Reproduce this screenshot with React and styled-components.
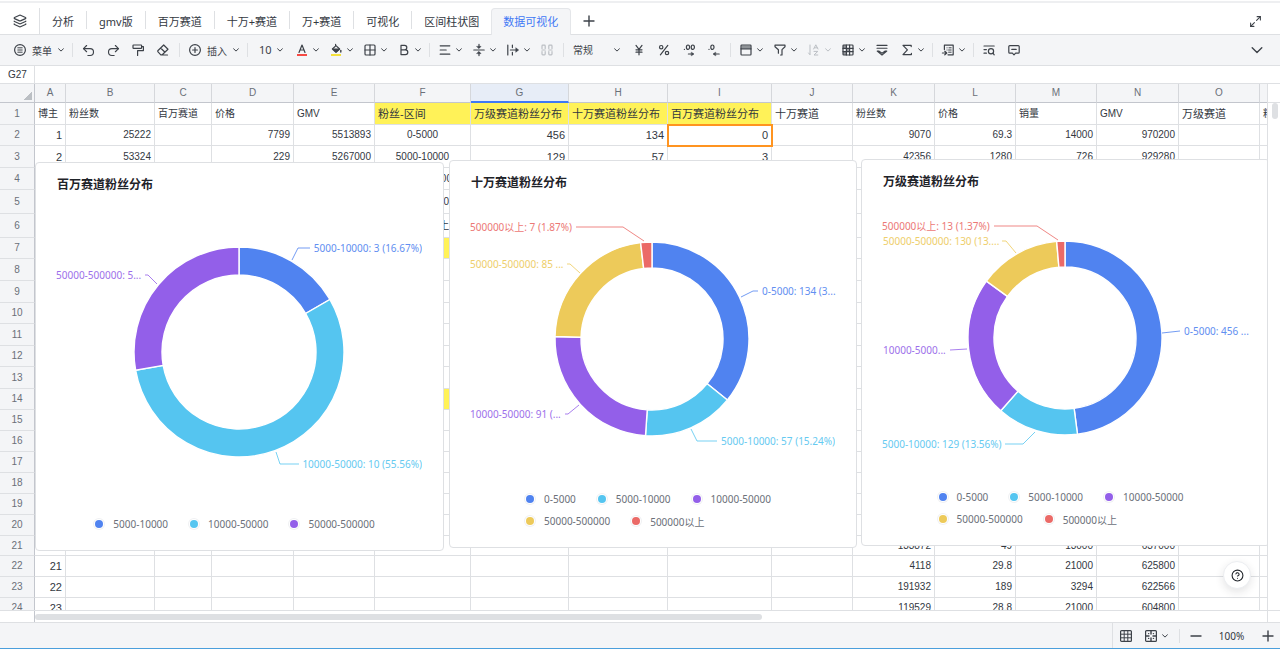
import React from "react";
import styled, { createGlobalStyle } from "styled-components";
import { Layers, Undo2, Redo2, Maximize2, CircleHelp } from "lucide-react";

const ui = `"Noto Sans", "Noto Sans CJK SC", sans-serif`;
const cellFont = `"Liberation Sans", "Noto Sans CJK SC", sans-serif`;

const palette = {
  ink: "#1f2329",
  cell: "#33383f",
  icon: "#3d4249",
  muted: "#6b7079",
  disabled: "#bbbfc4",
  bar: "#f4f5f7",
  line: "#dee0e3",
  blue: "#5083f0",
  cyan: "#55c5f0",
  purple: "#935fe9",
  yellow: "#edca5a",
  red: "#eb6a67",
  brand: "#3f78f5",
  mark: "#fff258",
};

const GlobalStyle = createGlobalStyle`
  * { box-sizing: border-box; }
  html, body { margin: 0; height: 100%; overflow: hidden; }
  body { font-family: ${ui}; color: ${palette.ink}; background: #fff; }
  button, input, select { font: inherit; color: inherit; }
  ul, h2 { margin: 0; padding: 0; }
`;

const Page = styled.div`
  display: flex;
  flex-direction: column;
  height: 100vh;
  border-bottom: 1px solid #4a9fdc;
`;

const TopStrip = styled.div`
  flex: none;
  height: 3px;
  border-bottom: 2px solid #eeeff1;
`;

/* ---------- sheet tabs ---------- */

const TabBar = styled.nav`
  flex: none;
  display: flex;
  align-items: flex-end;
  height: 32px;
  border-bottom: 1px solid ${palette.line};
`;

const TabSep = styled.span`
  flex: none;
  width: 1px;
  height: ${(p) => (p.$tall ? 26 : 18)}px;
  margin-bottom: ${(p) => (p.$tall ? 0 : 5)}px;
  background: ${palette.line};
`;

const Tab = styled.button`
  flex: none;
  height: 27px;
  margin: 0 0 -1px;
  padding: 0 12px 0 ${(p) => (p.$active ? 11 : 12)}px;
  border: 1px solid ${(p) => (p.$active ? "#e4e6e9" : "transparent")};
  border-width: 1px ${(p) => (p.$active ? 1 : 0)}px 0;
  border-radius: 4px 4px 0 0;
  background: ${(p) => (p.$active ? palette.bar : "transparent")};
  color: ${(p) => (p.$active ? palette.brand : palette.cell)};
  font-size: 11px;
  line-height: 16px;
  white-space: nowrap;
`;

const TabIconButton = styled.button`
  flex: none;
  display: flex;
  align-items: center;
  justify-content: center;
  width: ${(p) => p.$w || 40}px;
  height: 26px;
  padding: 0;
  border: 0;
  background: none;
  color: ${palette.icon};
`;

const Spacer = styled.div`
  flex: 1;
`;

/* ---------- toolbar ---------- */

const Toolbar = styled.div`
  flex: none;
  display: flex;
  align-items: center;
  height: 31px;
  padding: 0 10px 0 8px;
  background: ${palette.bar};
  border-bottom: 1px solid ${palette.line};
  overflow: hidden;
`;

const ToolButton = styled.button`
  flex: none;
  display: flex;
  align-items: center;
  gap: 2px;
  width: ${(p) => p.$w || 25}px;
  height: 24px;
  padding: 0 4px;
  border: 0;
  background: none;
  color: ${(p) => (p.disabled ? palette.disabled : palette.icon)};
  font-size: 10px;
`;

const CenteredButton = styled(ToolButton)`
  justify-content: center;
`;

const ToolLabel = styled.span`
  flex: 1;
  padding-left: 2px;
  text-align: left;
  white-space: nowrap;
`;

const ToolSep = styled.span`
  flex: none;
  width: 1px;
  height: 14px;
  margin: 0 3px;
  background: ${palette.line};
`;

const SelectBox = styled.label`
  flex: none;
  display: flex;
  align-items: center;
  width: ${(p) => p.$w}px;
  padding: 0 6px 0 ${(p) => p.$pad}px;
  color: ${palette.icon};
`;

const Select = styled.select`
  flex: 1;
  min-width: 0;
  padding: 0;
  border: 0;
  appearance: none;
  background: none;
  font-size: ${(p) => p.$size || 10}px;
  line-height: 16px;
`;

const Svg = styled.svg`
  flex: none;
  display: block;
  fill: none;
  stroke: currentColor;
  stroke-width: 1.2;
  stroke-linecap: round;
  stroke-linejoin: round;
`;

const Icon = ({ children, ...rest }) => (
  <Svg width="16" height="16" viewBox="0 0 16 16" aria-hidden="true" {...rest}>
    {children}
  </Svg>
);

const Chevron = () => (
  <Svg width="8" height="8" viewBox="0 0 8 8" aria-hidden="true">
    <path d="M1.6 2.8 4 5.1l2.4-2.3" strokeWidth="1" />
  </Svg>
);

const icons = {
  menu: (
    <Icon>
      <circle cx="8" cy="8" r="5.4" />
      <path d="M5.8 5.8h4.4M5.8 8h4.4M5.8 10.2h4.4" strokeWidth="1" />
    </Icon>
  ),
  paint: (
    <Icon>
      <rect x="3" y="3" width="8.6" height="3.4" rx=".6" />
      <path d="M11.8 4.6h1.6v4H7.6v1.6M7.6 10.4v3" />
    </Icon>
  ),
  eraser: (
    <Icon>
      <path d="M8.7 3 13 7.2l-5.8 5.6H5.8L2.8 9.6v-.9zM5.6 6l4.4 4.2M7 13h5.5" />
    </Icon>
  ),
  plus: (
    <Icon>
      <circle cx="8" cy="8" r="5.4" />
      <path d="M8 5.6v4.8M5.6 8h4.8" />
    </Icon>
  ),
  color: (
    <Icon>
      <path d="M5 10.4 8 3l3 7.4M6 8h4" />
      <path d="M3 13h10" stroke="#f54a45" strokeWidth="2" strokeLinecap="butt" />
    </Icon>
  ),
  fill: (
    <Icon>
      <path d="m8 3.6 3.6 3.4L8 10.2 4.4 7zM7.6 4V2.4" />
      <path d="M5 7h6.4L8 10z" fill="currentColor" />
      <path d="M12.8 8.4v1.6" strokeWidth="1.4" />
      <path d="M3 13h10" stroke="#f5e13c" strokeWidth="2" strokeLinecap="butt" />
    </Icon>
  ),
  border: (
    <Icon>
      <rect x="3" y="3" width="10" height="10" rx="1" />
      <path d="M8 3v10M3 8h10" />
    </Icon>
  ),
  bold: (
    <Icon>
      <path d="M5 3.4h3.6a2.2 2.2 0 0 1 0 4.4H5zM5 7.8h4.4a2.4 2.4 0 0 1 0 4.8H5z" />
    </Icon>
  ),
  align: (
    <Icon>
      <path d="M3.2 3.8h9.6M3.2 8h6M3.2 12.2h9.6" />
    </Icon>
  ),
  valign: (
    <Icon>
      <path d="M2.8 8h10.4M8 2.4v3M8 13.6v-3" />
      <path d="M6 4.4h4L8 6.4zM6 11.6h4L8 9.6z" fill="currentColor" strokeWidth=".6" />
    </Icon>
  ),
  wrap: (
    <Icon>
      <path d="M2.8 3v10M7.4 3v2.6M7.4 10.4V13M5.4 8h6.4" />
      <path d="m11 6 2.6 2L11 10z" fill="currentColor" strokeWidth=".6" />
    </Icon>
  ),
  merge: (
    <Icon>
      <path d="M3 6.4V4q0-.8.8-.8h1.6q.8 0 .8.8v2.4M9.8 6.4V4q0-.8.8-.8h1.6q.8 0 .8.8v2.4M3 9.6V12q0 .8.8.8h1.6q.8 0 .8-.8V9.6M9.8 9.6V12q0 .8.8.8h1.6q.8 0 .8-.8V9.6M3 8h3.2M9.8 8H13" />
    </Icon>
  ),
  yen: (
    <Icon>
      <path d="m5 3.4 3 4 3-4M8 7.4v5.4M5 7.8h6M5 10.2h6" />
    </Icon>
  ),
  percent: (
    <Icon>
      <circle cx="5.2" cy="5.2" r="1.7" />
      <circle cx="11" cy="11" r="1.7" />
      <path d="m11.8 3.4-7.4 9.4" />
    </Icon>
  ),
  moreDecimals: (
    <Icon>
      <ellipse cx="7" cy="5.2" rx="1.6" ry="2.2" />
      <ellipse cx="11.8" cy="5.2" rx="1.6" ry="2.2" />
      <path d="M3.4 7.3v.1M7.4 12h4" />
      <path d="m10.6 10.4 2.4 1.6-2.4 1.6z" fill="currentColor" strokeWidth=".6" />
    </Icon>
  ),
  lessDecimals: (
    <Icon>
      <ellipse cx="6.4" cy="5.2" rx="1.6" ry="2.2" />
      <path d="M3 7.3v.1M9 12h4.2" />
      <path d="M9.4 10.4 7 12l2.4 1.6z" fill="currentColor" strokeWidth=".6" />
    </Icon>
  ),
  table: (
    <Icon>
      <rect x="3" y="3" width="10" height="10" rx=".8" />
      <path d="M3.4 3.4h9.2v3H3.4z" fill="currentColor" fillOpacity=".55" stroke="none" />
      <path d="M3 6.8h10" />
    </Icon>
  ),
  filter: (
    <Icon>
      <path d="M3 3.2h10v1.6L10 7.6V13H8.6M3 3.2v1.6l3.4 3v3.4" />
    </Icon>
  ),
  sort: (
    <Icon>
      <path d="M4 3v9.8L2.6 11M7.6 7 9.8 2.8 12 7M8.4 5.8h2.8M8 9.4h3.8L8 13h3.8" strokeWidth="1" />
    </Icon>
  ),
  freeze: (
    <Icon>
      <rect x="3" y="3" width="10" height="10" rx=".8" />
      <path d="M3 6.4h10M3 9.6h10M6.4 3v10M9.6 3v10" />
      <path d="M6.4 6.4h3.2v3.2H6.4zM3 3h3.4v3.4H3zM3 9.6h3.4V13H3z" fill="currentColor" fillOpacity=".5" stroke="none" />
    </Icon>
  ),
  collapseRows: (
    <Icon>
      <path d="M3 3.4h10M3 6.2h10M3.2 9h1.6L8 11.2 11.2 9h1.6L8 13.2z" strokeWidth="1.1" />
    </Icon>
  ),
  sum: (
    <Icon strokeWidth="1.4">
      <path d="M12.2 4.6V3.4H4l4.4 4.5L4 12.6h8.4v-1.2" />
    </Icon>
  ),
  pivot: (
    <Icon>
      <path d="M4.4 7.4V3.2h8.8v9.6H8" />
      <path d="M7 5.8h.1M9 5.8h2.2M8.6 8h2.6M8.6 10.2h2.6M7 8h.1" strokeWidth="1" />
      <path d="M2.4 11h4M4.8 9.2 6.8 11l-2 1.8" />
    </Icon>
  ),
  find: (
    <Icon>
      <path d="M3 4h10.2M3 7.6h2.4M3 11.2h2.4" />
      <circle cx="10" cy="9.2" r="2.6" />
      <path d="M12 11.2l1.2 1.6" />
    </Icon>
  ),
  comment: (
    <Icon>
      <path d="M3.8 3.6h8.4q1 0 1 1v5.6q0 1-1 1H9.6L8 12.8l-1.6-1.6H3.8q-1 0-1-1V4.6q0-1 1-1zM5.8 7.4h4.4" />
    </Icon>
  ),
  grid: (
    <Icon>
      <rect x="2.6" y="2.6" width="10.8" height="10.8" rx="1" />
      <path d="M3 6.2h10M3 9.8h10M6.2 3v10M9.8 3v10" strokeWidth="1" />
    </Icon>
  ),
  fit: (
    <Icon>
      <rect x="2.6" y="2.6" width="10.8" height="10.8" rx="1" />
      <path d="M8 3v3M8 10v3M3 8h3M10 8h3" strokeWidth="1.4" />
      <path d="M5.6 5.6h.1M10.4 5.6h.1M5.6 10.4h.1M10.4 10.4h.1" strokeWidth="1.4" />
    </Icon>
  ),
};

const Tool = ({ name, label, menu, text, width, disabled }) => (
  <ToolButton type="button" aria-label={label} disabled={disabled} $w={width || (menu ? 34 : 25)}>
    {icons[name]}
    {text && <ToolLabel>{text}</ToolLabel>}
    {menu && <Chevron />}
  </ToolButton>
);

/* ---------- formula bar ---------- */

const FormulaBar = styled.div`
  flex: none;
  display: flex;
  height: 18px;
  border-bottom: 1px solid ${palette.line};
`;

const NameBox = styled.input`
  flex: none;
  width: 35px;
  padding: 0 0 0 8px;
  border: 0;
  border-right: 1px solid ${palette.line};
  color: ${palette.cell};
  font-family: ${cellFont};
  font-size: 10px;
`;

const FormulaInput = styled.input`
  flex: 1;
  min-width: 0;
  padding: 0 8px;
  border: 0;
  font-size: 10px;
`;

/* ---------- sheet ---------- */

const Sheet = styled.main`
  position: relative;
  flex: 1;
  min-height: 0;
  display: grid;
  grid-template-columns: minmax(0, 1fr) 13px;
  grid-template-rows: minmax(0, 1fr) 12px;
`;

const Canvas = styled.div`
  position: relative;
  overflow: hidden;
`;

const Grid = styled.table`
  table-layout: fixed;
  width: 1342px;
  border-collapse: separate;
  border-spacing: 0;
  color: ${palette.cell};
  font-family: ${cellFont};
  font-size: 10px;
  line-height: 14px;
`;

const Row = styled.tr`
  height: ${(p) => p.$h}px;
`;

const ColHead = styled.th`
  padding: 0;
  border-right: 1px solid #d5d7db;
  border-bottom: ${(p) => (p.$active ? `2px solid ${palette.brand}` : "1px solid #c3c6cd")};
  background: ${(p) => (p.$active ? "#e7edf7" : palette.bar)};
  color: ${palette.muted};
  font-weight: 400;
`;

const Corner = styled.td`
  padding: 0;
  border-right: 1px solid #c3c6cd;
  border-bottom: 1px solid #c3c6cd;
  background: linear-gradient(135deg, transparent 50%, #bbbfc4 50%) right 2px bottom 2px / 9px 9px no-repeat,
    ${palette.bar};
`;

const RowHead = styled.th`
  padding: 0;
  border-right: 1px solid #c3c6cd;
  border-bottom: 1px solid ${palette.line};
  background: ${palette.bar};
  color: ${palette.muted};
  font-weight: 400;
`;

const Cell = styled.td`
  padding: 0 3px;
  border-right: 1px solid ${palette.line};
  border-bottom: 1px solid ${palette.line};
  background: ${(p) => (p.$mark ? palette.mark : "#fff")};
  font-size: ${(p) => (p.$large ? 11 : 10)}px;
  text-align: ${(p) => p.$align};
  white-space: nowrap;
  overflow: hidden;
  ${(p) => p.$outlined && "outline: 2px solid #ff9420; outline-offset: -1px;"}
`;

const VerticalGutter = styled.div`
  border-left: 1px solid ${palette.line};
`;

const GutterHead = styled.div`
  height: 19px;
  border-bottom: 1px solid ${palette.line};
`;

const VerticalThumb = styled.div`
  width: 6px;
  height: 16px;
  margin-left: 4px;
  border-radius: 3px;
  background: ${palette.line};
`;

const HorizontalGutter = styled.div`
  display: flex;
  align-items: center;
  border-top: 1px solid ${palette.line};
`;

const GutterCorner = styled.div`
  flex: none;
  width: 35px;
  height: 100%;
  border-right: 1px solid #c3c6cd;
`;

const HorizontalTrack = styled.div`
  flex: 1;
  padding-top: 1px;
`;

const HorizontalThumb = styled.div`
  width: 59%;
  height: 6px;
  border-radius: 3px;
  background: ${palette.line};
`;

const GutterEnd = styled.div`
  border-left: 1px solid ${palette.line};
  border-top: 1px solid ${palette.line};
`;

const columns = [
  ["A", 31], ["B", 89], ["C", 57], ["D", 82], ["E", 81], ["F", 96], ["G", 98], ["H", 99],
  ["I", 104], ["J", 81], ["K", 82], ["L", 81], ["M", 81], ["N", 82], ["O", 81], ["P", 82],
];

const rowHeights = [
  22, 21, 22, 22, 24, 24, 21, 22, 22, 21, 22, 21, 22, 21, 21, 21, 21, 21, 21, 21, 20, 21, 21, 21,
];

const data = {
  1: {
    A: "博主", B: "粉丝数", C: "百万赛道", D: "价格", E: "GMV", F: "粉丝-区间", G: "万级赛道粉丝分布",
    H: "十万赛道粉丝分布", I: "百万赛道粉丝分布", J: "十万赛道", K: "粉丝数", L: "价格", M: "销量",
    N: "GMV", O: "万级赛道", P: "粉丝数",
  },
  2: { A: 1, B: 25222, D: 7799, E: 5513893, F: "0-5000", G: 456, H: 134, I: 0, K: 9070, L: 69.3, M: 14000, N: 970200 },
  3: { A: 2, B: 53324, D: 229, E: 5267000, F: "5000-10000", G: 129, H: 57, I: 3, K: 42356, L: 1280, M: 726, N: 929280 },
  4: { F: "10000-50000" },
  5: { F: "50000-500000" },
  6: { F: "500000以上" },
  21: { K: 133872, L: 49, M: 13000, N: 637000 },
  22: { A: 21, K: 4118, L: 29.8, M: 21000, N: 625800 },
  23: { A: 22, K: 191932, L: 189, M: 3294, N: 622566 },
  24: { A: 23, K: 119529, L: 28.8, M: 21000, N: 604800 },
};

const isMarked = (row, col) =>
  (row === 1 && "FGHI".includes(col)) || (col === "F" && (row === 7 || row === 14));

const isLarge = (row, col) => (row === 1 ? "FGHIJO".includes(col) : "AGHI".includes(col));

const alignOf = (row, col) => (row === 1 ? "left" : col === "F" ? "center" : "right");

/* ---------- charts ---------- */

const Card = styled.section`
  position: absolute;
  display: flex;
  flex-direction: column;
  left: ${(p) => p.$x}px;
  top: ${(p) => p.$y}px;
  width: ${(p) => p.$w}px;
  height: ${(p) => p.$h}px;
  padding-bottom: 15px;
  border: 1px solid ${palette.line};
  border-radius: 4px;
  background: #fff;
`;

const CardTitle = styled.h2`
  flex: none;
  padding: 0 21px;
  font-size: 12px;
  font-weight: 600;
  line-height: 43px;
  height: 40px;
`;

const Donut = styled.svg`
  flex: 1;
  min-height: 0;
  width: 100%;
  display: block;
`;

const Label = styled.text`
  font-size: 10px;
  dominant-baseline: central;
  opacity: 0.9;
`;

const Legend = styled.div`
  flex: none;
  align-self: center;
`;

const LegendRow = styled.ul`
  display: flex;
  gap: 21px;
  padding-right: 10px;
  list-style: none;
`;

const LegendItem = styled.li`
  display: flex;
  align-items: center;
  gap: 9px;
  height: 22px;
  color: ${palette.muted};
  font-size: 10px;
`;

const Dot = styled.span`
  width: 10px;
  height: 10px;
  padding: 1px;
  border-radius: 50%;
  box-shadow: 0 0 0 1px #f0f1f3;

  &::before {
    content: "";
    display: block;
    height: 8px;
    border-radius: 50%;
    background: ${(p) => p.$color};
  }
`;

const { blue, cyan, purple, yellow, red } = palette;

/* Label and leader points are measured from the centre of the ring. */
const charts = [
  {
    title: "百万赛道粉丝分布",
    x: 35, y: 78, w: 409, h: 389,
    view: "-203 -149 407 310",
    outer: 105, inner: 77,
    slices: [[3, blue], [10, cyan], [5, purple]],
    labels: [
      { text: "5000-10000: 3 (16.67%)", color: blue, x: 183, y: -104, anchor: "end", line: "53,-92 59,-104 71,-104" },
      { text: "50000-500000: 5...", color: purple, x: -183, y: -77, anchor: "start", line: "-82,-68 -91,-77 -94,-77" },
      { text: "10000-50000: 10 (55.56%)", color: cyan, x: 183, y: 112, anchor: "end", line: "37,100 41,112 60,112" },
    ],
    legend: [[["5000-10000", blue], ["10000-50000", cyan], ["50000-500000", purple]]],
  },
  {
    title: "十万赛道粉丝分布",
    x: 449, y: 76, w: 408, h: 388,
    view: "-202 -138 406 287",
    outer: 97, inner: 71,
    slices: [[134, blue], [57, cyan], [91, purple], [85, yellow], [7, red]],
    labels: [
      { text: "500000以上: 7 (1.87%)", color: red, x: -182, y: -112, anchor: "start", line: "-76,-112 -29,-112 -8,-98" },
      { text: "50000-500000: 85 ...", color: yellow, x: -182, y: -75, anchor: "start", line: "-85,-75 -82,-75 -72,-66" },
      { text: "0-5000: 134 (3...", color: blue, x: 110, y: -48, anchor: "start", line: "89,-42 101,-48 106,-48" },
      { text: "10000-50000: 91 (...", color: purple, x: -182, y: 75, anchor: "start", line: "-87,75 -84,75 -73,66" },
      { text: "5000-10000: 57 (15.24%)", color: cyan, x: 183, y: 102, anchor: "end", line: "39,90 45,102 65,102" },
    ],
    legend: [
      [["0-5000", blue], ["5000-10000", cyan], ["10000-50000", purple]],
      [["50000-500000", yellow], ["500000以上", red]],
    ],
  },
  {
    title: "万级赛道粉丝分布",
    x: 861, y: 75, w: 409, h: 387,
    view: "-203 -138 407 286",
    outer: 97, inner: 71,
    slices: [[456, blue], [129, cyan], [223, purple], [130, yellow], [13, red]],
    labels: [
      { text: "500000以上: 13 (1.37%)", color: red, x: -183, y: -112, anchor: "start", line: "-71,-112 -28,-112 -7,-98" },
      { text: "50000-500000: 130 (13....", color: yellow, x: -182, y: -97, anchor: "start", line: "-63,-97 -59,-97 -49,-85" },
      { text: "0-5000: 456 ...", color: blue, x: 119, y: -7, anchor: "start", line: "97,-5 115,-7" },
      { text: "10000-5000...", color: purple, x: -182, y: 12, anchor: "start", line: "-115,12 -98,11" },
      { text: "5000-10000: 129 (13.56%)", color: cyan, x: -183, y: 106, anchor: "start", line: "-60,106 -42,106 -30,94" },
    ],
    legend: [
      [["0-5000", blue], ["5000-10000", cyan], ["10000-50000", purple]],
      [["50000-500000", yellow], ["500000以上", red]],
    ],
  },
];

const ringPaths = ({ slices, outer, inner }) => {
  const total = slices.reduce((sum, [n]) => sum + n, 0);
  const point = (r, a) => `${(r * Math.sin(a)).toFixed(2)} ${(-r * Math.cos(a)).toFixed(2)}`;
  let from = 0;
  return slices.map(([n, color]) => {
    const to = from + (n / total) * 2 * Math.PI;
    const big = to - from > Math.PI ? 1 : 0;
    const d = `M${point(outer, from)}A${outer} ${outer} 0 ${big} 1 ${point(outer, to)}L${point(inner, to)}A${inner} ${inner} 0 ${big} 0 ${point(inner, from)}Z`;
    from = to;
    return { d, color };
  });
};

const ChartCard = ({ chart }) => (
  <Card $x={chart.x} $y={chart.y} $w={chart.w} $h={chart.h}>
    <CardTitle>{chart.title}</CardTitle>
    <Donut viewBox={chart.view} preserveAspectRatio="xMinYMin meet" role="img" aria-label={chart.title}>
      {ringPaths(chart).map((s) => (
        <path key={s.color} d={s.d} fill={s.color} stroke="#fff" strokeWidth="1.4" />
      ))}
      {chart.labels.map((l) => (
        <g key={l.text}>
          <polyline points={l.line} fill="none" stroke={l.color} strokeWidth="1" opacity=".8" />
          <Label x={l.x} y={l.y} textAnchor={l.anchor} fill={l.color}>
            {l.text}
          </Label>
        </g>
      ))}
    </Donut>
    <Legend>
      {chart.legend.map((row, i) => (
        <LegendRow key={i}>
          {row.map(([name, color]) => (
            <LegendItem key={name}>
              <Dot $color={color} />
              {name}
            </LegendItem>
          ))}
        </LegendRow>
      ))}
    </Legend>
  </Card>
);

const HelpButton = styled.button`
  position: absolute;
  right: 29px;
  bottom: 33px;
  display: flex;
  align-items: center;
  justify-content: center;
  width: 28px;
  height: 28px;
  padding: 0;
  border: 1px solid #eceef1;
  border-radius: 50%;
  background: #fff;
  color: ${palette.ink};
  box-shadow: 0 3px 8px rgba(31, 35, 41, 0.12);
`;

/* ---------- status bar ---------- */

const StatusBar = styled.footer`
  flex: none;
  display: flex;
  justify-content: flex-end;
  height: 26px;
  border-top: 1px solid ${palette.line};
  background: ${palette.bar};
`;

const ViewTools = styled.div`
  display: flex;
  align-items: center;
  padding-left: 1px;
  border-left: 1px solid ${palette.line};
`;

const Zoom = styled.span`
  width: 47px;
  color: ${palette.cell};
  font-size: 10px;
  text-align: center;
`;

const tabs = ["分析", "gmv版", "百万赛道", "十万+赛道", "万+赛道", "可视化", "区间柱状图"];

export default function App() {
  return (
    <Page>
      <GlobalStyle />
      <TopStrip />
      <TabBar aria-label="工作表">
        <TabIconButton type="button" aria-label="全部工作表" $w={39}>
          <Layers size={14} strokeWidth={2} />
        </TabIconButton>
        <TabSep $tall />
        {tabs.map((name, i) => (
          <React.Fragment key={name}>
            {i > 0 && <TabSep />}
            <Tab type="button">{name}</Tab>
          </React.Fragment>
        ))}
        <Tab type="button" $active>
          数据可视化
        </Tab>
        <TabIconButton type="button" aria-label="新建工作表" $w={36}>
          <Icon>
            <path d="M8 3v10M3 8h10" strokeWidth="1.4" />
          </Icon>
        </TabIconButton>
        <Spacer />
        <TabIconButton type="button" aria-label="全屏" $w={50}>
          <Maximize2 size={13} strokeWidth={2} />
        </TabIconButton>
      </TabBar>

      <Toolbar role="toolbar" aria-label="工具栏">
        <Tool name="menu" label="菜单" text="菜单" menu width={61} />
        <ToolSep />
        <CenteredButton type="button" aria-label="撤销">
          <Undo2 size={15} strokeWidth={1.8} />
        </CenteredButton>
        <CenteredButton type="button" aria-label="重做">
          <Redo2 size={15} strokeWidth={1.8} />
        </CenteredButton>
        <Tool name="paint" label="格式刷" />
        <Tool name="eraser" label="清除格式" />
        <ToolSep />
        <Tool name="plus" label="插入" text="插入" menu width={61} />
        <ToolSep />
        <SelectBox $w={39} $pad={8}>
          <Select aria-label="字号" defaultValue="10" $size={11}>
            <option>10</option>
          </Select>
          <Chevron />
        </SelectBox>
        <Tool name="color" label="字体颜色" menu />
        <Tool name="fill" label="填充颜色" menu />
        <Tool name="border" label="边框" menu />
        <Tool name="bold" label="加粗" menu />
        <ToolSep />
        <Tool name="align" label="水平对齐" menu />
        <Tool name="valign" label="垂直对齐" menu />
        <Tool name="wrap" label="换行" menu />
        <Tool name="merge" label="合并单元格" disabled />
        <ToolSep />
        <SelectBox $w={60} $pad={6}>
          <Select aria-label="数字格式" defaultValue="常规">
            <option>常规</option>
          </Select>
          <Chevron />
        </SelectBox>
        <Tool name="yen" label="货币" />
        <Tool name="percent" label="百分比" />
        <Tool name="moreDecimals" label="增加小数位" />
        <Tool name="lessDecimals" label="减少小数位" />
        <ToolSep />
        <Tool name="table" label="表格样式" menu />
        <Tool name="filter" label="筛选" menu />
        <Tool name="sort" label="排序" menu disabled />
        <Tool name="freeze" label="冻结" menu />
        <Tool name="collapseRows" label="下拉列表" />
        <Tool name="sum" label="求和" menu />
        <ToolSep />
        <Tool name="pivot" label="数据透视表" menu />
        <ToolSep />
        <Tool name="find" label="查找" />
        <Tool name="comment" label="评论" />
        <Spacer />
        <ToolButton type="button" aria-label="收起">
          <Icon>
            <path d="m3.2 5.8 4.8 4.6 4.8-4.6" strokeWidth="1.4" />
          </Icon>
        </ToolButton>
      </Toolbar>

      <FormulaBar>
        <NameBox aria-label="单元格" defaultValue="G27" />
        <FormulaInput aria-label="公式" />
      </FormulaBar>

      <Sheet>
        <Canvas>
          <Grid>
            <colgroup>
              <col style={{ width: 35 }} />
              {columns.map(([name, width]) => (
                <col key={name} style={{ width }} />
              ))}
            </colgroup>
            <thead>
              <Row $h={19}>
                <Corner />
                {columns.map(([name]) => (
                  <ColHead key={name} scope="col" $active={name === "G"}>
                    {name}
                  </ColHead>
                ))}
              </Row>
            </thead>
            <tbody>
              {rowHeights.map((h, i) => {
                const n = i + 1;
                return (
                  <Row key={n} $h={h}>
                    <RowHead scope="row">{n}</RowHead>
                    {columns.map(([col]) => (
                      <Cell
                        key={col}
                        $mark={isMarked(n, col)}
                        $large={isLarge(n, col)}
                        $align={alignOf(n, col)}
                        $outlined={n === 2 && col === "I"}
                      >
                        {data[n]?.[col]}
                      </Cell>
                    ))}
                  </Row>
                );
              })}
            </tbody>
          </Grid>
          {charts.map((chart) => (
            <ChartCard key={chart.title} chart={chart} />
          ))}
        </Canvas>
        <VerticalGutter>
          <GutterHead />
          <VerticalThumb />
        </VerticalGutter>
        <HorizontalGutter>
          <GutterCorner />
          <HorizontalTrack>
            <HorizontalThumb />
          </HorizontalTrack>
        </HorizontalGutter>
        <GutterEnd />
        <HelpButton type="button" aria-label="帮助">
          <CircleHelp size={13} strokeWidth={2} />
        </HelpButton>
      </Sheet>

      <StatusBar>
        <ViewTools>
          <Tool name="grid" label="网格视图" />
          <Tool name="fit" label="适应窗口" menu width={37} />
          <ToolSep />
          <CenteredButton type="button" aria-label="缩小">
            <Icon>
              <path d="M3 8h10" strokeWidth="1.4" />
            </Icon>
          </CenteredButton>
          <Zoom>100%</Zoom>
          <CenteredButton type="button" aria-label="放大">
            <Icon>
              <path d="M8 3v10M3 8h10" strokeWidth="1.4" />
            </Icon>
          </CenteredButton>
        </ViewTools>
      </StatusBar>
    </Page>
  );
}
